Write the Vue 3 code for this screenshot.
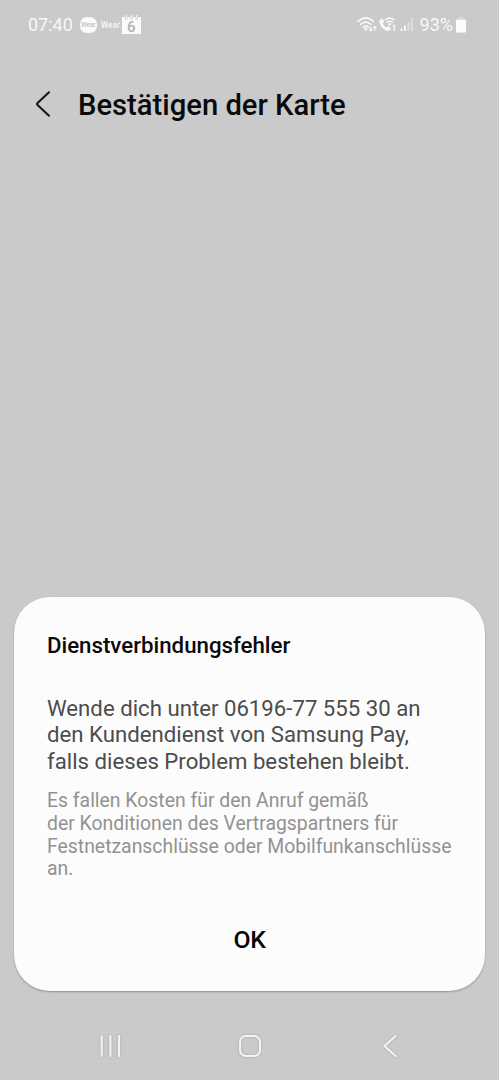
<script setup>
const message = [
  'Wende dich unter 06196-77 555 30 an',
  'den Kundendienst von Samsung Pay,',
  'falls dieses Problem bestehen bleibt.',
]
const note = [
  'Es fallen Kosten für den Anruf gemäß',
  'der Konditionen des Vertragspartners für',
  'Festnetzanschlüsse oder Mobilfunkanschlüsse',
  'an.',
]
</script>

<template>
  <div class="screen">
    <header class="status">
      <div class="status-side">
        <span class="time">07:40</span>
        <span class="wear-badge">Wear</span>
        <span class="wear">Wear</span>
        <span class="calendar">
          <svg width="19" height="19" viewBox="0 0 19 19">
            <path d="M0 2H3.2V4.5H5.4V2H8.4V4.5H10.6V2H13.6V4.5H15.8V2H19V19H0Z" fill="#fafafa" />
            <path d="M4.3 0V3.5M9.5 0V3.5M14.7 0V3.5" stroke="#fafafa" stroke-width="1" />
          </svg>
          <b>6</b>
        </span>
      </div>
      <div class="status-side">
        <svg class="network" width="57" height="18" viewBox="0 0 57 18" fill="none" stroke="#f8f8f8">
          <g stroke-width="1.7" stroke-linecap="round">
            <path d="M1.2 5.4Q8.7 -1.8 16.2 5.4" />
            <path d="M3.6 8.4Q8.7 3.8 13.8 8.4" />
            <path d="M6.1 11.1Q8.7 9 11.3 11.1" />
          </g>
          <path d="M6.6 12.4L8.8 15L10.9 12.4Q8.8 11 6.6 12.4Z" fill="#f8f8f8" stroke="none" />
          <path d="M13.7 10.4V14.4M12 13L13.7 14.9L15.4 13M17.9 14.7V10.8M16.2 12.2L17.9 10.3L19.6 12.2" stroke-width="1.2" />
          <path d="M24.7 2.2Q22 3.5 22.4 6Q23.6 12 29.7 15Q32.8 15.6 34.2 12.6L31 10.2L28.8 11.3Q26.4 9.6 25.8 7.5L27.3 5.5Z" fill="#f8f8f8" stroke="none" />
          <path d="M27.8 4.2Q32.8 -0.2 37.7 4.2M29.5 6.6Q32.8 3.8 36 6.6" stroke-width="1.4" />
          <circle cx="32.7" cy="8.4" r="1.3" fill="#f8f8f8" stroke="none" />
          <path d="M35.7 10.2L37.3 9.2V15" stroke-width="1.3" />
          <path d="M44.5 12.5V15M48 9.5V15" stroke-width="2" />
          <path d="M51.5 6V15M55 2V15" stroke-width="2" stroke-opacity=".42" />
        </svg>
        <span class="percent">93%</span>
        <svg class="battery" width="10" height="16" viewBox="0 0 10 16">
          <path d="M3 0H7V1.5H8.5Q10 1.5 10 3V14Q10 15.5 8.5 15.5H1.5Q0 15.5 0 14V3Q0 1.5 1.5 1.5H3Z" fill="#dedede" />
          <path d="M0 3H10V14Q10 15.5 8.5 15.5H1.5Q0 15.5 0 14Z" fill="#fcfcfc" />
        </svg>
      </div>
    </header>

    <div class="toolbar">
      <svg width="16" height="28" viewBox="0 0 16 28" fill="none" stroke="#111" stroke-width="2" stroke-linecap="round" stroke-linejoin="round">
        <path d="M14 2.2L2.3 13.2Q1.6 14 2.3 14.8L14 25.8" />
      </svg>
      <h1>Bestätigen der Karte</h1>
    </div>

    <section class="dialog" role="dialog">
      <h2>Dienstverbindungsfehler</h2>
      <p class="message"><span v-for="line in message" :key="line">{{ line }}</span></p>
      <p class="note"><span v-for="line in note" :key="line">{{ line }}</span></p>
      <button class="ok">OK</button>
    </section>

    <nav class="nav">
      <svg width="24" height="24" viewBox="0 0 24 24" fill="none" stroke="#f5f5f5" stroke-width="2" stroke-linecap="round">
        <path d="M3.7 2V22M12.4 2V22M21.1 2V22" />
      </svg>
      <svg width="24" height="24" viewBox="0 0 24 24" fill="none" stroke="#f5f5f5" stroke-width="2">
        <rect x="2" y="2" width="20" height="20" rx="6" />
      </svg>
      <svg width="24" height="24" viewBox="0 0 24 24" fill="none" stroke="#f5f5f5" stroke-width="2" stroke-linecap="round" stroke-linejoin="round">
        <path d="M17.5 2L6.5 12L17.5 22" />
      </svg>
    </nav>
  </div>
</template>

<style>
body { margin: 0; background: #cacaca; }
</style>

<style scoped>
.screen {
  box-sizing: border-box;
  width: 499px;
  height: 1080px;
  display: flex;
  flex-direction: column;
  overflow: hidden;
  background: #cacaca;
  font-family: Roboto, sans-serif;
}
h1, h2, p { margin: 0; font-weight: 500; white-space: nowrap; }
.status {
  height: 50px;
  padding: 0 33px 0 28px;
  display: flex;
  justify-content: space-between;
  color: #f8f8f8;
}
.status-side { display: flex; align-items: center; }
.time { font-size: 18px; line-height: 20px; }
.wear-badge {
  width: 17px;
  height: 16px;
  margin-left: 7px;
  border-radius: 7px;
  background: #fafafa;
  color: #b4b4b4;
  font-size: 6.4px;
  line-height: 16px;
  text-align: center;
}
.wear { width: 18px; margin-left: 4px; font-size: 8.3px; font-weight: 500; }
.calendar { position: relative; width: 19px; height: 19px; margin-left: 3px; margin-top: -1px; }
.calendar svg { display: block; }
.calendar b { position: absolute; left: 0; top: 4px; width: 19px; text-align: center; color: #b2b2b2; font-size: 15px; font-weight: 500; line-height: 16px; }
.percent { margin-left: 6px; font-size: 18px; line-height: 20px; }
.battery { margin-left: 3px; }
.toolbar { height: 108px; display: flex; align-items: center; padding-left: 35px; gap: 27px; }
.toolbar h1 { margin-top: 2px; font-size: 29.2px; line-height: 36px; color: #0a0a0a; }
.dialog {
  box-sizing: border-box;
  height: 394px;
  margin: 439px 14px 0;
  padding: 34px 33px 0;
  border-radius: 36px;
  background: #fcfcfc;
  box-shadow: 0 1px 2px rgba(0, 0, 0, .28);
}
.dialog h2 { font-size: 22.25px; line-height: 28px; color: #0a0a0a; }
.message { margin-top: 36px; font-size: 22.2px; line-height: 26.3px; font-weight: 400; color: #4c4c4c; }
.note { margin-top: 16.4px; font-size: 19.4px; line-height: 22.7px; font-weight: 400; color: #929292; }
.message span, .note span { display: block; }
.ok {
  display: block;
  margin: 43px auto 0;
  padding: 0 20px;
  border: 0;
  background: none;
  font: 500 24.8px/32px Roboto, sans-serif;
  letter-spacing: -.3px;
  color: #050505;
}
.nav { display: flex; justify-content: space-between; padding: 43px 97px 0 98px; }
.nav svg { filter: drop-shadow(0 0 1px rgba(0, 0, 0, .2)); }
</style>
